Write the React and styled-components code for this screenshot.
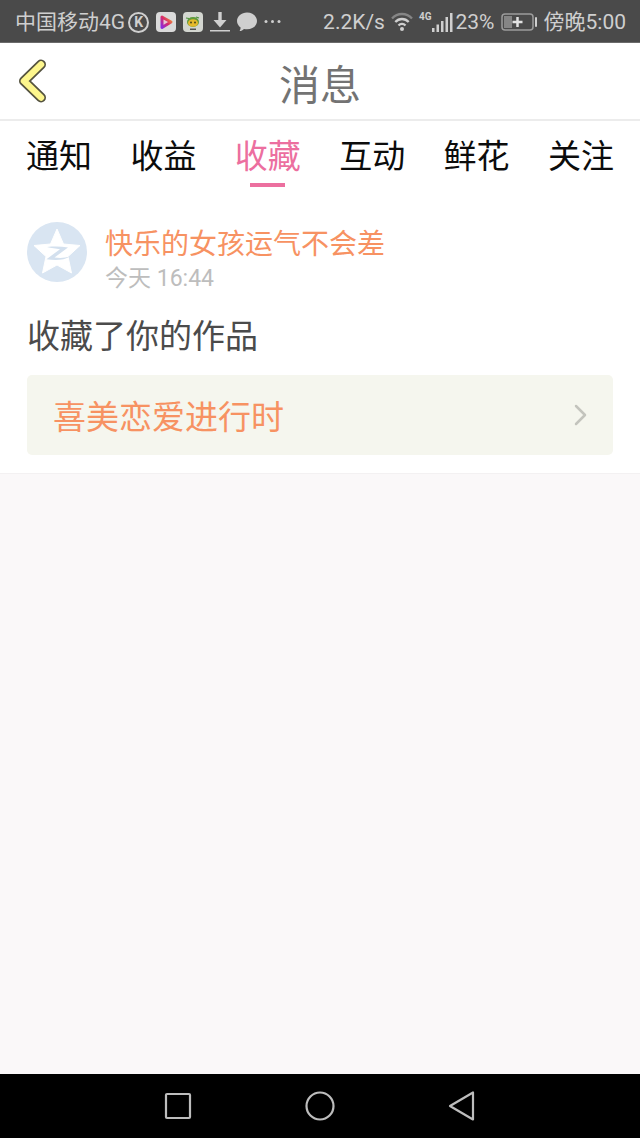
import { useState } from "react";
import styled, { createGlobalStyle } from "styled-components";

const GlobalStyle = createGlobalStyle`
  * {
    box-sizing: border-box;
  }

  body {
    margin: 0;
    background-color: #faf8f9;
    font-family: "Noto Sans CJK SC", sans-serif;
    font-weight: 400;
  }

  button {
    margin: 0;
    padding: 0;
    border: none;
    background: none;
    font: inherit;
    color: inherit;
    cursor: pointer;
  }

  h1, p {
    margin: 0;
    font-weight: 400;
  }

  svg {
    display: block;
    flex-shrink: 0;
  }
`;

const Page = styled.div`
  display: flex;
  flex-direction: column;
  min-height: 100vh;
`;

const StatusBar = styled.div`
  display: flex;
  align-items: center;
  justify-content: space-between;
  height: 43px;
  padding: 2px 14px 0 15px;
  border-bottom: 1px solid #6b6b6b;
  background-color: #4a4a4a;
  color: #cfcfcf;
  font-family: Roboto, "Noto Sans CJK SC", sans-serif;
  font-size: 21px;
  line-height: 30px;
  white-space: nowrap;
`;

const StatusGroup = styled.div`
  display: flex;
  align-items: center;
  gap: ${(props) => props.$gap}px;
`;

const RoundBadge = styled.span`
  display: flex;
  align-items: center;
  justify-content: center;
  width: 21px;
  height: 21px;
  border: 2px solid #cfcfcf;
  border-radius: 50%;
  font-size: 14px;
  font-weight: 700;
  line-height: 14px;
`;

const Signal = styled.span`
  display: flex;
  align-items: flex-start;
  font-size: 10px;
  font-weight: 700;
  line-height: 10px;
`;

const Header = styled.header`
  display: grid;
  grid-template-columns: 64px 1fr 64px;
  align-items: center;
  height: 78px;
  border-bottom: 2px solid #ececec;
  background-color: #fff;
`;

const BackButton = styled.button`
  display: flex;
  align-items: center;
  height: 76px;
  padding-left: 18px;
`;

const Title = styled.h1`
  padding-top: 2px;
  color: #737373;
  font-size: 41px;
  line-height: 56px;
  text-align: center;
`;

const Tabs = styled.nav`
  display: flex;
  justify-content: space-between;
  padding: 9px 26px 0;
  background-color: #fff;
`;

const Tab = styled.button`
  display: flex;
  flex-direction: column;
  align-items: center;
  gap: 5px;
  color: ${(props) => (props.$active ? "#ec6f9f" : "#0c0c0c")};
  font-size: 33px;
  line-height: 48px;

  &::after {
    content: "";
    width: 35px;
    height: 4px;
    background-color: ${(props) => (props.$active ? "#ec6f9f" : "transparent")};
  }
`;

const Card = styled.article`
  padding: 35px 27px 18px;
  border-bottom: 1px solid #f3f1f2;
  background-color: #fff;
`;

const Author = styled.div`
  display: flex;
  align-items: flex-start;
  gap: 18px;
`;

const Name = styled.p`
  color: #f79262;
  font-size: 28px;
  line-height: 41px;
`;

const Time = styled.p`
  color: #bdbdbd;
  font-family: Roboto, "Noto Sans CJK SC", sans-serif;
  font-size: 23px;
  line-height: 32px;
`;

const Message = styled.p`
  padding: 15px 0 17px;
  color: #4b4b4b;
  font-size: 33px;
  line-height: 48px;
`;

const WorkLink = styled.a`
  display: flex;
  align-items: center;
  justify-content: space-between;
  height: 80px;
  padding: 0 26px;
  border-radius: 5px;
  background-color: #f5f6ee;
  color: #f79262;
  font-size: 33px;
  line-height: 48px;
  text-decoration: none;
`;

const NavBar = styled.nav`
  display: flex;
  align-items: center;
  justify-content: center;
  gap: 110px;
  height: 64px;
  margin-top: auto;
  background-color: #000;
`;

const NavButton = styled.button`
  width: 32px;
  height: 32px;
`;

const TABS = ["通知", "收益", "收藏", "互动", "鲜花", "关注"];

function PlayIcon() {
  return (
    <svg width="20" height="20" viewBox="0 0 20 20">
      <defs>
        <linearGradient id="play" x1="0" y1="1" x2="1" y2="0">
          <stop offset="0" stopColor="#8a2be0" />
          <stop offset="0.5" stopColor="#d92a6a" />
          <stop offset="1" stopColor="#f0a030" />
        </linearGradient>
      </defs>
      <rect width="20" height="20" rx="4" fill="#dadada" />
      <path
        d="M6 5L15 10L6 15.500Z"
        fill="#e6c6d4"
        stroke="url(#play)"
        strokeWidth="3"
        strokeLinejoin="round"
      />
    </svg>
  );
}

function FaceIcon() {
  return (
    <svg width="20" height="20" viewBox="0 0 20 20">
      <rect width="20" height="20" rx="4" fill="#d3d6d0" />
      <ellipse cx="10" cy="10" rx="6" ry="5" fill="#5f9a3a" />
      <ellipse cx="10" cy="11" rx="5" ry="3.800" fill="#e5b92c" />
      <circle cx="8" cy="10.500" r="1" fill="#4b4a1c" />
      <circle cx="12" cy="10.500" r="1" fill="#4b4a1c" />
      <path d="M7 17.200H13" stroke="#333" strokeWidth="1.200" />
      <path d="M3 6L6 6.500M16 6L13 5" stroke="#49913a" strokeWidth="1.200" />
    </svg>
  );
}

function DownloadIcon() {
  return (
    <svg width="20" height="20" viewBox="0 0 20 20" fill="#cfcfcf">
      <path d="M8.300 0H11.700V8H16.500L10 15.500L3.500 8H8.300Z" />
      <rect y="18" width="20" height="1.500" />
    </svg>
  );
}

function ChatIcon() {
  return (
    <svg width="20" height="20" viewBox="0 0 20 20" fill="#cfcfcf">
      <path d="M10 0.500C15.500 0.500 20 4.200 20 9S15.500 17.300 10 17.300C9 17.300 8 17.200 7 16.900C5.800 18.200 4.400 18.900 2.600 19C3.400 17.800 3.700 16.600 3.600 15.400C1.400 13.900 0 11.600 0 9C0 4.200 4.500 0.500 10 0.500Z" />
    </svg>
  );
}

function DotsIcon() {
  return (
    <svg width="17" height="20" viewBox="0 0 17 20" fill="#cfcfcf">
      <circle cx="2" cy="9.500" r="1.500" />
      <circle cx="8.500" cy="9.500" r="1.500" />
      <circle cx="15" cy="9.500" r="1.500" />
    </svg>
  );
}

function WifiIcon() {
  return (
    <svg width="22" height="20" viewBox="0 0 22 20" fill="none" strokeWidth="2.300">
      <path d="M1 6.500C6.500 0.500 15.500 0.500 21 6.500" stroke="#858585" />
      <path d="M4.300 10C8 6 14 6 17.700 10" stroke="#cfcfcf" />
      <path d="M7.500 13.500C9.500 11.400 12.500 11.400 14.500 13.500" stroke="#cfcfcf" />
      <circle cx="11" cy="17" r="2" fill="#cfcfcf" />
    </svg>
  );
}

function SignalIcon() {
  return (
    <svg width="21" height="20" viewBox="0 0 21 20" fill="#cfcfcf">
      <rect x="0" y="16" width="2.500" height="4" />
      <rect x="4.500" y="12.500" width="2.500" height="7.500" />
      <rect x="9" y="9" width="2.500" height="11" />
      <rect x="13.500" y="5" width="2.500" height="15" />
      <rect x="18" y="1" width="2.500" height="19" />
    </svg>
  );
}

function BatteryIcon() {
  return (
    <svg width="37" height="18" viewBox="0 0 37 18">
      <rect x="1" y="1" width="31" height="16" rx="3" fill="none" stroke="#9c9c9c" strokeWidth="1.500" />
      <rect x="3" y="3" width="8" height="12" fill="#858585" />
      <path d="M16.500 4V14M11.500 9H21.500" stroke="#e2e2e2" strokeWidth="2.500" />
      <rect x="34" y="4" width="2" height="10" rx="1" fill="#cfcfcf" />
    </svg>
  );
}

function BackIcon() {
  return (
    <svg width="30" height="44" viewBox="0 0 30 44" fill="none" strokeLinecap="round" strokeLinejoin="round">
      <path d="M23 5.500L6 22L23 38.500" stroke="#55533f" strokeWidth="10" />
      <path d="M23 5.500L6 22L23 38.500" stroke="#fdf68d" strokeWidth="6.500" />
    </svg>
  );
}

function Avatar() {
  return (
    <svg width="60" height="60" viewBox="0 0 60 60" role="img" aria-label="头像">
      <circle cx="30" cy="30" r="30" fill="#d9e5f2" />
      <path
        d="M30 7L36.500 22L53 23.500L41 34.500L44.500 51L30 43L15.500 51L19 34.500L7 23.500L23.500 22Z"
        fill="#fff"
        stroke="#fff"
        strokeLinejoin="round"
      />
      <path
        d="M20 25C27 24.300 34 24.300 41 25.500L27.500 35.500C33 36.200 38 36 43 34.500C37 38.500 28 38.500 19.500 37.200L33 27.200C29 26.500 24 26.200 20 25Z"
        fill="#d3e0ee"
      />
    </svg>
  );
}

function ChevronIcon() {
  return (
    <svg width="14" height="22" viewBox="0 0 14 22" fill="none">
      <path d="M3 2L12 11L3 20" stroke="#c3c4bd" strokeWidth="2.500" strokeLinecap="round" strokeLinejoin="round" />
    </svg>
  );
}

function NavIcon({ children }) {
  return (
    <svg
      width="32"
      height="32"
      viewBox="0 0 32 32"
      fill="none"
      stroke="#bdbdbd"
      strokeWidth="2.200"
      strokeLinejoin="round"
    >
      {children}
    </svg>
  );
}

function App() {
  const [activeTab, setActiveTab] = useState("收藏");

  return (
    <>
      <GlobalStyle />
      <Page>
        <StatusBar>
          <StatusGroup $gap={7}>
            <StatusGroup $gap={3}>
              <span>中国移动4G</span>
              <RoundBadge>K</RoundBadge>
            </StatusGroup>
            <PlayIcon />
            <FaceIcon />
            <DownloadIcon />
            <ChatIcon />
            <DotsIcon />
          </StatusGroup>
          <StatusGroup $gap={6}>
            <span>2.2K/s</span>
            <WifiIcon />
            <StatusGroup $gap={3}>
              <Signal>
                4G
                <SignalIcon />
              </Signal>
              <span>23%</span>
            </StatusGroup>
            <BatteryIcon />
            <span>傍晚5:00</span>
          </StatusGroup>
        </StatusBar>

        <Header>
          <BackButton aria-label="返回">
            <BackIcon />
          </BackButton>
          <Title>消息</Title>
        </Header>

        <Tabs>
          {TABS.map((tab) => (
            <Tab key={tab} $active={tab === activeTab} onClick={() => setActiveTab(tab)}>
              {tab}
            </Tab>
          ))}
        </Tabs>

        <Card>
          <Author>
            <Avatar />
            <div>
              <Name>快乐的女孩运气不会差</Name>
              <Time>今天 16:44</Time>
            </div>
          </Author>
          <Message>收藏了你的作品</Message>
          <WorkLink href="#work">
            喜美恋爱进行时
            <ChevronIcon />
          </WorkLink>
        </Card>

        <NavBar>
          <NavButton aria-label="最近任务">
            <NavIcon>
              <rect x="4" y="4" width="24" height="24" rx="1" />
            </NavIcon>
          </NavButton>
          <NavButton aria-label="主页">
            <NavIcon>
              <circle cx="16" cy="16" r="13.500" />
            </NavIcon>
          </NavButton>
          <NavButton aria-label="返回上一页">
            <NavIcon>
              <path d="M4 16L27 2.500V29.500Z" />
            </NavIcon>
          </NavButton>
        </NavBar>
      </Page>
    </>
  );
}

export default App;
